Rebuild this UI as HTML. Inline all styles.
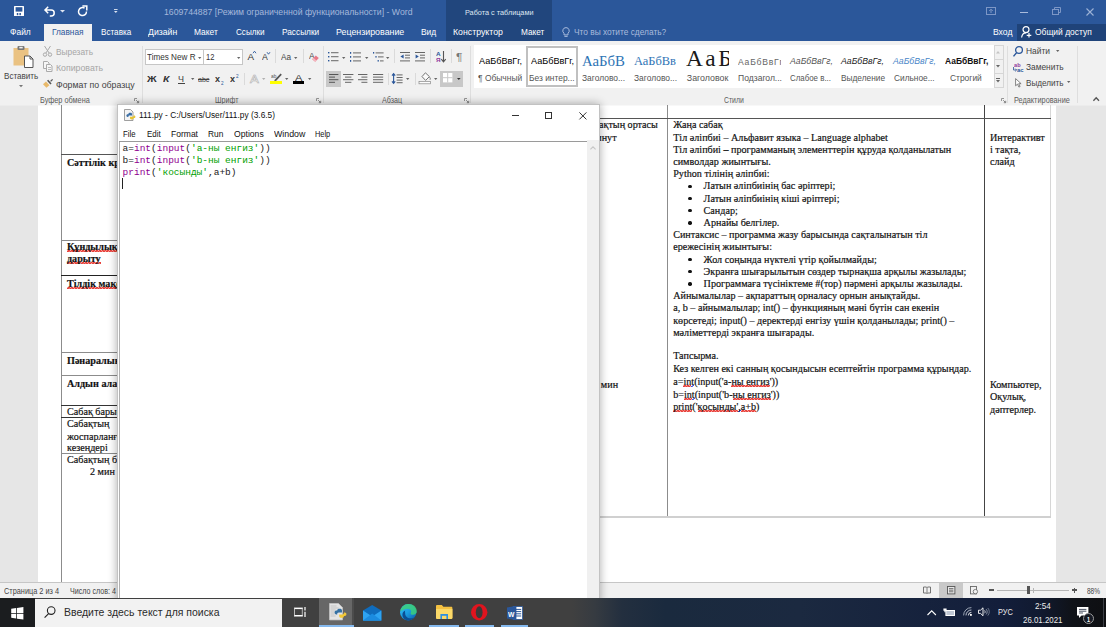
<!DOCTYPE html>
<html lang="ru"><head><meta charset="utf-8"><title>Word</title>
<style>
*{box-sizing:border-box;margin:0;padding:0}
html,body{width:1106px;height:627px;overflow:hidden;background:#e6e6e6}
body{font-family:"Liberation Sans",sans-serif;font-size:9.5px;color:#444;position:relative}
.a{position:absolute;white-space:nowrap}
.t{transform-origin:0 50%}
svg{overflow:visible}
.wr,.wb{background-size:2.8px 2px;background-position:0 100%,1.4px 100%;background-repeat:repeat-x}
.wr{background-image:linear-gradient(135deg,transparent 36%,#e8403a 36%,#e8403a 64%,transparent 64%),linear-gradient(45deg,transparent 36%,#e8403a 36%,#e8403a 64%,transparent 64%)}
.wb{background-image:linear-gradient(135deg,transparent 36%,#3a55e0 36%,#3a55e0 64%,transparent 64%),linear-gradient(45deg,transparent 36%,#3a55e0 36%,#3a55e0 64%,transparent 64%)}

</style></head><body>
<div class="a" style="left:0px;top:0px;width:1106px;height:41px;background:#2b579a;"></div>
<div class="a" style="left:446px;top:0px;width:106px;height:41px;background:#21467d;"></div>
<div class="a" style="left:1017px;top:24px;width:89px;height:17px;background:#1f4379;"></div>
<div class="a" style="left:44px;top:24px;width:48px;height:18px;background:#f1f1f1;"></div>
<div class="a" style="left:0px;top:41px;width:1106px;height:64px;background:#f1f1f1;"></div>
<div class="a" style="left:0px;top:105px;width:1106px;height:1px;background:#ececec;"></div>
<svg class="a" style="left:14px;top:6px;" width="10" height="10" viewBox="0 0 10 10"><rect x="0" y="0" width="10" height="10" rx="0.6" fill="#fff"/><rect x="1.6" y="1.2" width="6.8" height="4.4" fill="#2b579a"/><rect x="2.8" y="7" width="1.5" height="2.2" fill="#2b579a"/><rect x="5.4" y="7" width="1.5" height="2.2" fill="#2b579a"/></svg>
<svg class="a" style="left:44px;top:6px;" width="12" height="10" viewBox="0 0 12 10"><path d="M4.2 0.8L1 4l3.2 3.2M1 4h6.2a3 3 0 0 1 0 6h-1.4" fill="none" stroke="#fff" stroke-width="1.5"/></svg>
<svg class="a" style="left:60px;top:10px;" width="5" height="3" viewBox="0 0 5 3"><path d="M0 0h5l-2.5 2.6z" fill="#dfe6f2"/></svg>
<svg class="a" style="left:77px;top:6px;" width="11" height="10" viewBox="0 0 11 10"><path d="M7.6 2.2A4 4 0 1 0 9.5 5.6" fill="none" stroke="#fff" stroke-width="1.5"/><path d="M5.4 0h4.4v4.4" fill="none" stroke="#fff" stroke-width="1.5"/></svg>
<svg class="a" style="left:113.8px;top:9px;" width="3.6" height="4.4" viewBox="0 0 3.6 4.4"><rect x="0" y="0" width="3.6" height="0.9" fill="#dfe6f2"/><path d="M0 2h3.6l-1.8 2z" fill="#dfe6f2"/></svg>
<div class="a t" id="t0" style="left:164px;top:7.12px;font-size:9.21px;line-height:11.97px;color:#a5b8db;transform:scaleX(0.9454);">1609744887 [Режим ограниченной функциональности] - Word</div>
<div class="a t" id="t1" style="left:465px;top:8.02px;font-size:7.71px;line-height:10.02px;color:#dfe6f2;transform:scaleX(0.9456);">Работа с таблицами</div>
<svg class="a" style="left:986px;top:7px;" width="10" height="8" viewBox="0 0 10 8"><rect x="0.5" y="0.5" width="9" height="7" fill="none" stroke="#7d97c6"/><path d="M5 6V2.4M3.2 4L5 2.2L6.8 4" fill="none" stroke="#7d97c6"/></svg>
<div class="a" style="left:1020px;top:12px;width:8px;height:1px;background:#a9bbdc;"></div>
<svg class="a" style="left:1052px;top:7px;" width="9" height="8" viewBox="0 0 9 8"><path d="M2.5 2V0.5h6v5H7" fill="none" stroke="#7d97c6"/><rect x="0.5" y="2.5" width="6" height="5" fill="none" stroke="#7d97c6"/></svg>
<svg class="a" style="left:1086px;top:8px;" width="8" height="8" viewBox="0 0 8 8"><path d="M0.5 0.5l7 7M7.5 0.5l-7 7" stroke="#9db2d6" stroke-width="1.1"/></svg>
<div class="a t" id="t2" style="left:10.2px;top:26.04px;font-size:9.59px;line-height:12.47px;color:#fff;transform:scaleX(0.8828);">Файл</div>
<div class="a t" id="t3" style="left:52px;top:26.04px;font-size:9.59px;line-height:12.47px;color:#2b579a;transform:scaleX(0.8638);">Главная</div>
<div class="a t" id="t4" style="left:100.8px;top:26.04px;font-size:9.59px;line-height:12.47px;color:#fff;transform:scaleX(0.8481);">Вставка</div>
<div class="a t" id="t5" style="left:148px;top:26.04px;font-size:9.59px;line-height:12.47px;color:#fff;transform:scaleX(0.9067);">Дизайн</div>
<div class="a t" id="t6" style="left:194.4px;top:26.04px;font-size:9.59px;line-height:12.47px;color:#fff;transform:scaleX(0.8779);">Макет</div>
<div class="a t" id="t7" style="left:236px;top:26.04px;font-size:9.59px;line-height:12.47px;color:#fff;transform:scaleX(0.8478);">Ссылки</div>
<div class="a t" id="t8" style="left:282px;top:26.04px;font-size:9.59px;line-height:12.47px;color:#fff;transform:scaleX(0.8651);">Рассылки</div>
<div class="a t" id="t9" style="left:335.7px;top:26.04px;font-size:9.59px;line-height:12.47px;color:#fff;transform:scaleX(0.9234);">Рецензирование</div>
<div class="a t" id="t10" style="left:420.5px;top:26.04px;font-size:9.59px;line-height:12.47px;color:#fff;transform:scaleX(0.8772);">Вид</div>
<div class="a t" id="t11" style="left:453.4px;top:26.04px;font-size:9.59px;line-height:12.47px;color:#fff;transform:scaleX(0.9135);">Конструктор</div>
<div class="a t" id="t12" style="left:520.5px;top:26.04px;font-size:9.59px;line-height:12.47px;color:#fff;transform:scaleX(0.8595);">Макет</div>
<div class="a t" id="t13" style="left:573.5px;top:26.04px;font-size:9.59px;line-height:12.47px;color:#a9bbdc;transform:scaleX(0.8707);">Что вы хотите сделать?</div>
<div class="a t" id="t14" style="left:992.6px;top:26.04px;font-size:9.59px;line-height:12.47px;color:#fff;transform:scaleX(0.8952);">Вход</div>
<div class="a t" id="t15" style="left:1035px;top:26.04px;font-size:9.59px;line-height:12.47px;color:#fff;transform:scaleX(0.8825);">Общий доступ</div>
<svg class="a" style="left:562px;top:27px;" width="8" height="11" viewBox="0 0 8 11"><path d="M4 0.6a3.2 3.2 0 0 1 2 5.7v1.6h-4v-1.6a3.2 3.2 0 0 1 2-5.7z" fill="none" stroke="#a9bbdc"/><path d="M2.4 9.4h3.2" stroke="#a9bbdc"/></svg>
<svg class="a" style="left:1021px;top:26px;" width="11" height="12" viewBox="0 0 11 12"><circle cx="5" cy="3.6" r="3" fill="none" stroke="#fff" stroke-width="1.2"/><path d="M0.6 11.5c0.4-3 2-4.6 4.4-4.6" fill="none" stroke="#fff" stroke-width="1.2"/><path d="M8 7v4.6M5.7 9.3h4.6" stroke="#fff" stroke-width="1.2"/></svg>
<svg class="a" style="left:13px;top:46px;" width="21" height="22" viewBox="0 0 21 22"><rect x="0.5" y="2" width="15" height="17.5" fill="#eac282"/><rect x="4.5" y="0" width="7" height="4" rx="1" fill="#777"/><rect x="6.3" y="0.8" width="3.4" height="1.6" fill="#f1f1f1"/><path d="M11.5 10h5.5l3 3v8.5h-8.5z" fill="#fff" stroke="#555" stroke-width="1"/><path d="M17 10v3h3" fill="none" stroke="#555"/></svg>
<div class="a t" id="t16" style="left:4px;top:69.73px;font-size:9.4px;line-height:12.22px;color:#444;transform:scaleX(0.8629);">Вставить</div>
<svg class="a" style="left:19.4px;top:85px;" width="4" height="2.5" viewBox="0 0 4 2.5"><path d="M0 0h4l-2.0 2.3z" fill="#777"/></svg>
<svg class="a" style="left:43px;top:46px;" width="9" height="11" viewBox="0 0 9 11"><path d="M1.5 0l4.6 7M7.5 0L2.9 7" stroke="#aaa" fill="none"/><circle cx="2" cy="8.6" r="1.7" fill="none" stroke="#aaa"/><circle cx="7" cy="8.6" r="1.7" fill="none" stroke="#aaa"/></svg>
<div class="a t" id="t17" style="left:56px;top:46.13px;font-size:9.4px;line-height:12.22px;color:#a6a6a6;transform:scaleX(0.8872);">Вырезать</div>
<svg class="a" style="left:43px;top:61px;" width="10" height="11" viewBox="0 0 10 11"><path d="M0.5 0.5h4l1.5 1.5v5.5h-5.5z" fill="#f6f6f6" stroke="#aaa"/><path d="M3.5 3.5h4l1.5 1.5v5.5h-5.5z" fill="#f6f6f6" stroke="#aaa"/><path d="M5 6.5h3M5 8.5h3" stroke="#bbb"/></svg>
<div class="a t" id="t18" style="left:56px;top:62.23px;font-size:9.4px;line-height:12.22px;color:#a6a6a6;transform:scaleX(0.9349);">Копировать</div>
<svg class="a" style="left:43px;top:79px;" width="10" height="9" viewBox="0 0 10 9"><path d="M0 5.2l3-2.6l3.4 3.6l-3 2.6z" fill="#e8b96a"/><path d="M4 1.8l1.2-1l3.4 3.6l-1.2 1z" fill="#555"/><path d="M7.6 2.4L9.6 0.4" stroke="#555" stroke-width="1.3"/></svg>
<div class="a t" id="t19" style="left:56px;top:78.53px;font-size:9.4px;line-height:12.22px;color:#444;transform:scaleX(0.9360);">Формат по образцу</div>
<div class="a t" id="t20" style="left:40px;top:96.36px;font-size:8.27px;line-height:10.75px;color:#5c5c5c;transform:scaleX(0.8866);">Буфер обмена</div>
<svg class="a" style="left:134px;top:98px;" width="5" height="5" viewBox="0 0 5 5"><path d="M0.5 3V0.5H3" fill="none" stroke="#8a8a8a" stroke-width="0.9"/><path d="M2.2 2.2l2.3 2.3M4.7 2.8v1.9h-1.9" fill="none" stroke="#7a7a7a" stroke-width="0.9"/></svg>
<div class="a" style="left:142px;top:46px;width:1px;height:57px;background:#dedede;"></div>
<div class="a" style="left:144.5px;top:49px;width:59px;height:15.5px;background:#fff;border:1px solid #c6c6c6"></div>
<div class="a" style="left:203px;top:49px;width:40px;height:15.5px;background:#fff;border:1px solid #c6c6c6"></div>
<div class="a t" id="t21" style="left:146.5px;top:51.13px;font-size:9.4px;line-height:12.22px;color:#333;transform:scaleX(0.8675);">Times New R</div>
<svg class="a" style="left:197.60000000000002px;top:56.5px;" width="3.4" height="2.2" viewBox="0 0 3.4 2.2"><path d="M0 0h3.4l-1.7 2.0z" fill="#666"/></svg>
<div class="a t" id="t22" style="left:206.3px;top:51.13px;font-size:9.4px;line-height:12.22px;color:#333;transform:scaleX(0.8048);">12</div>
<svg class="a" style="left:236.8px;top:56.5px;" width="3.4" height="2.2" viewBox="0 0 3.4 2.2"><path d="M0 0h3.4l-1.7 2.0z" fill="#666"/></svg>
<div class="a t" id="t23" style="left:247.5px;top:51.07px;font-size:9.87px;line-height:12.83px;color:#333;">A</div>
<svg class="a" style="left:253px;top:51px;" width="3" height="2.4" viewBox="0 0 3 2.4"><path d="M0 2.2L1.5 0.2L3 2.2" fill="none" stroke="#2b579a" stroke-width="0.9"/></svg>
<div class="a t" id="t24" style="left:261.8px;top:52.09px;font-size:8.84px;line-height:11.49px;color:#333;transform:scaleX(0.9846);">A</div>
<svg class="a" style="left:267px;top:51.6px;" width="3" height="2.4" viewBox="0 0 3 2.4"><path d="M0 0.2L1.5 2.2L3 0.2" fill="none" stroke="#2b579a" stroke-width="0.9"/></svg>
<div class="a" style="left:275px;top:49px;width:1px;height:14px;background:#dadada;"></div>
<div class="a t" id="t25" style="left:281px;top:50.93px;font-size:9.4px;line-height:12.22px;color:#444;transform:scaleX(0.8719);">Aa</div>
<svg class="a" style="left:293.8px;top:56.5px;" width="3.4" height="2.2" viewBox="0 0 3.4 2.2"><path d="M0 0h3.4l-1.7 2.0z" fill="#666"/></svg>
<div class="a" style="left:302.5px;top:49px;width:1px;height:14px;background:#dadada;"></div>
<div class="a t" id="t26" style="left:308.6px;top:51.27px;font-size:8.46px;line-height:11.0px;color:#444;transform:scaleX(0.9928);">A</div>
<svg class="a" style="left:312px;top:55px;" width="7" height="7" viewBox="0 0 7 7.4"><path d="M0 4.4l3.8-4l3.2 2.8l-3.8 4z" fill="#e8798a"/><path d="M0 4.4l1.3-1.4l3.2 2.8l-1.3 1.4z" fill="#f4b6bf"/></svg>
<div class="a" style="left:322.5px;top:46px;width:1px;height:57px;background:#dedede;"></div>
<div class="a t" id="t27" style="left:146.6px;top:73.36px;font-size:9.78px;line-height:12.71px;color:#333;font-weight:bold;transform:scaleX(1.0874);">Ж</div>
<div class="a t" id="t28" style="left:163.4px;top:73.36px;font-size:9.78px;line-height:12.71px;color:#333;font-weight:bold;font-style:italic;transform:scaleX(1.0639);">К</div>
<div class="a t" id="t29" style="left:178.4px;top:73.33px;font-size:9.4px;line-height:12.22px;color:#444;transform:scaleX(0.9600);">Ч</div>
<div class="a" style="left:178px;top:83px;width:7.4px;height:1px;background:#444;"></div>
<svg class="a" style="left:190.70000000000002px;top:77.5px;" width="3.4" height="2.2" viewBox="0 0 3.4 2.2"><path d="M0 0h3.4l-1.7 2.0z" fill="#666"/></svg>
<div class="a t" id="t30" style="left:198px;top:74.60px;font-size:7.52px;line-height:9.78px;color:#444;transform:scaleX(0.9402);text-decoration:line-through;">abc</div>
<div class="a t" id="t31" style="left:215px;top:73.36px;font-size:9.78px;line-height:12.71px;color:#333;font-weight:bold;transform:scaleX(0.9195);">x</div>
<div class="a t" id="t32" style="left:220.6px;top:79.95px;font-size:5.17px;line-height:6.72px;color:#2b579a;transform:scaleX(0.9043);">2</div>
<div class="a t" id="t33" style="left:229.8px;top:73.36px;font-size:9.78px;line-height:12.71px;color:#333;font-weight:bold;transform:scaleX(0.9195);">x</div>
<div class="a t" id="t34" style="left:235.6px;top:72.95px;font-size:5.17px;line-height:6.72px;color:#2b579a;transform:scaleX(0.9043);">2</div>
<div class="a" style="left:243.5px;top:72.5px;width:1px;height:12px;background:#dadada;"></div>
<div class="a t" id="t35" style="left:249.6px;top:72.62px;font-size:10.72px;line-height:13.94px;color:#fbfbfb;transform:scaleX(1.2297);-webkit-text-stroke:0.55px #b0b0b0;">A</div>
<svg class="a" style="left:262.1px;top:77.5px;" width="3.4" height="2.2" viewBox="0 0 3.4 2.2"><path d="M0 0h3.4l-1.7 2.0z" fill="#b0b0b0"/></svg>
<div class="a t" id="t36" style="left:270.6px;top:72.64px;font-size:5.08px;line-height:6.6px;color:#555;transform:scaleX(0.9547);">ab</div>
<svg class="a" style="left:273px;top:73px;" width="9" height="8" viewBox="0 0 9 8"><path d="M1 7.4L7.6 0.6L8.8 1.8L3 8z" fill="#555"/></svg>
<div class="a" style="left:270px;top:81.2px;width:12px;height:2.8px;background:#ffff00;"></div>
<svg class="a" style="left:285.3px;top:77.5px;" width="3.4" height="2.2" viewBox="0 0 3.4 2.2"><path d="M0 0h3.4l-1.7 2.0z" fill="#666"/></svg>
<div class="a t" id="t37" style="left:295px;top:71.73px;font-size:9.4px;line-height:12.22px;color:#333;transform:scaleX(1.1810);">A</div>
<div class="a" style="left:293.2px;top:81.4px;width:11px;height:2.8px;background:#000;"></div>
<svg class="a" style="left:307.7px;top:77.5px;" width="3.4" height="2.2" viewBox="0 0 3.4 2.2"><path d="M0 0h3.4l-1.7 2.0z" fill="#666"/></svg>
<div class="a t" id="t38" style="left:215px;top:96.36px;font-size:8.27px;line-height:10.75px;color:#5c5c5c;transform:scaleX(0.8639);">Шрифт</div>
<svg class="a" style="left:316px;top:98px;" width="5" height="5" viewBox="0 0 5 5"><path d="M0.5 3V0.5H3" fill="none" stroke="#8a8a8a" stroke-width="0.9"/><path d="M2.2 2.2l2.3 2.3M4.7 2.8v1.9h-1.9" fill="none" stroke="#7a7a7a" stroke-width="0.9"/></svg>
<svg class="a" style="left:327.5px;top:52px;" width="11" height="10" viewBox="0 0 11 10"><rect x="0" y="0" width="1.4" height="1.4" fill="#2b579a"/><rect x="3" y="0.2" width="7.5" height="1" fill="#666"/><rect x="0" y="4" width="1.4" height="1.4" fill="#2b579a"/><rect x="3" y="4.2" width="7.5" height="1" fill="#666"/><rect x="0" y="8" width="1.4" height="1.4" fill="#2b579a"/><rect x="3" y="8.2" width="7.5" height="1" fill="#666"/></svg>
<svg class="a" style="left:342.2px;top:56.5px;" width="3.4" height="2.2" viewBox="0 0 3.4 2.2"><path d="M0 0h3.4l-1.7 2.0z" fill="#666"/></svg>
<svg class="a" style="left:350px;top:52px;" width="11" height="10" viewBox="0 0 11 10"><rect x="0" y="0" width="1.2" height="1.8" fill="#2b579a"/><rect x="3" y="0.4" width="8" height="1" fill="#666"/><rect x="0" y="4" width="1.2" height="1.8" fill="#2b579a"/><rect x="3" y="4.4" width="8" height="1" fill="#666"/><rect x="0" y="8" width="1.2" height="1.8" fill="#2b579a"/><rect x="3" y="8.4" width="8" height="1" fill="#666"/></svg>
<svg class="a" style="left:364.8px;top:56.5px;" width="3.4" height="2.2" viewBox="0 0 3.4 2.2"><path d="M0 0h3.4l-1.7 2.0z" fill="#666"/></svg>
<svg class="a" style="left:372.5px;top:52px;" width="11" height="10" viewBox="0 0 11 10"><rect x="0" y="0" width="1.2" height="1.6" fill="#2b579a"/><rect x="2.6" y="0.4" width="8" height="1" fill="#666"/><rect x="2.4" y="4" width="1.2" height="1.6" fill="#2b579a"/><rect x="5" y="4.4" width="5.6" height="1" fill="#666"/><rect x="4.6" y="8" width="1.2" height="1.6" fill="#2b579a"/><rect x="7" y="8.4" width="3.6" height="1" fill="#666"/></svg>
<svg class="a" style="left:386.1px;top:56.5px;" width="3.4" height="2.2" viewBox="0 0 3.4 2.2"><path d="M0 0h3.4l-1.7 2.0z" fill="#666"/></svg>
<div class="a" style="left:394px;top:49px;width:1px;height:14px;background:#dadada;"></div>
<svg class="a" style="left:400px;top:52px;" width="10" height="10" viewBox="0 0 10 10"><rect x="0" y="0" width="10" height="1" fill="#666"/><rect x="5" y="2.7" width="5" height="1" fill="#666"/><rect x="5" y="5.4" width="5" height="1" fill="#666"/><rect x="0" y="8.4" width="10" height="1" fill="#666"/><path d="M3.6 2.4v4L0.4 4.4z" fill="#2b579a"/></svg>
<svg class="a" style="left:415px;top:52px;" width="10" height="10" viewBox="0 0 10 10"><rect x="0" y="0" width="10" height="1" fill="#666"/><rect x="5" y="2.7" width="5" height="1" fill="#666"/><rect x="5" y="5.4" width="5" height="1" fill="#666"/><rect x="0" y="8.4" width="10" height="1" fill="#666"/><path d="M0.6 2.4v4L3.8 4.4z" fill="#2b579a"/></svg>
<div class="a" style="left:430px;top:49px;width:1px;height:14px;background:#dadada;"></div>
<div class="a t" id="t39" style="left:436px;top:50.70px;font-size:6.02px;line-height:7.83px;color:#2b579a;font-weight:bold;transform:scaleX(1.0552);">A</div>
<div class="a t" id="t40" style="left:436px;top:56.50px;font-size:6.02px;line-height:7.83px;color:#8e3a9d;font-weight:bold;transform:scaleX(1.0628);">Я</div>
<svg class="a" style="left:441px;top:51px;" width="5" height="12" viewBox="0 0 5 12"><path d="M2.5 0v10.6M0.3 8.2l2.2 2.6l2.2-2.6" fill="none" stroke="#555" stroke-width="1.1"/></svg>
<div class="a" style="left:450.5px;top:49px;width:1px;height:14px;background:#dadada;"></div>
<div class="a t" id="t41" style="left:456.4px;top:51.20px;font-size:10.34px;line-height:13.44px;color:#777;transform:scaleX(1.1506);">¶</div>
<div class="a" style="left:325.5px;top:71px;width:15px;height:15.5px;background:#c8c8c8;"></div>
<svg class="a" style="left:328.6px;top:73.5px;" width="9.4" height="9" viewBox="0 0 9.4 9"><rect x="0" y="0" width="9.4" height="1" fill="#555"/><rect x="0" y="2.6" width="6" height="1" fill="#555"/><rect x="0" y="5.2" width="9.4" height="1" fill="#555"/><rect x="0" y="7.8" width="6" height="1" fill="#555"/></svg>
<svg class="a" style="left:343px;top:73.5px;" width="10.4" height="9" viewBox="0 0 10.4 9"><rect x="0" y="0" width="10.4" height="1" fill="#666"/><rect x="2" y="2.6" width="6.4" height="1" fill="#666"/><rect x="0" y="5.2" width="10.4" height="1" fill="#666"/><rect x="2" y="7.8" width="6.4" height="1" fill="#666"/></svg>
<svg class="a" style="left:358.4px;top:73.5px;" width="9.4" height="9" viewBox="0 0 9.4 9"><rect x="0" y="0" width="9.4" height="1" fill="#666"/><rect x="3.4" y="2.6" width="6" height="1" fill="#666"/><rect x="0" y="5.2" width="9.4" height="1" fill="#666"/><rect x="3.4" y="7.8" width="6" height="1" fill="#666"/></svg>
<svg class="a" style="left:372.8px;top:73.5px;" width="10.2" height="9" viewBox="0 0 10.2 9"><rect x="0" y="0" width="10.2" height="1" fill="#666"/><rect x="0" y="2.6" width="10.2" height="1" fill="#666"/><rect x="0" y="5.2" width="10.2" height="1" fill="#666"/><rect x="0" y="7.8" width="10.2" height="1" fill="#666"/></svg>
<div class="a" style="left:387.8px;top:72.5px;width:1px;height:12px;background:#dadada;"></div>
<svg class="a" style="left:392.4px;top:72.5px;" width="11" height="11" viewBox="0 0 11 11"><path d="M1.6 1.4v8.2M0 2.6L1.6 0.6l1.6 2M0 8.4l1.6 2l1.6-2" fill="none" stroke="#2b579a" stroke-width="1.1"/><rect x="4.6" y="1.4" width="6" height="1" fill="#666"/><rect x="4.6" y="4" width="6" height="1" fill="#666"/><rect x="4.6" y="6.6" width="6" height="1" fill="#666"/><rect x="4.6" y="9.2" width="6" height="1" fill="#666"/></svg>
<svg class="a" style="left:406.3px;top:77.5px;" width="3.4" height="2.2" viewBox="0 0 3.4 2.2"><path d="M0 0h3.4l-1.7 2.0z" fill="#666"/></svg>
<div class="a" style="left:415.3px;top:72.5px;width:1px;height:12px;background:#dadada;"></div>
<svg class="a" style="left:419px;top:72px;" width="12" height="12" viewBox="0 0 12 12"><path d="M3 4.6l3.4-3.8l4 3.8l-3.8 3.8z" fill="#fafafa" stroke="#666" stroke-width="0.9"/><path d="M10.6 5.2c0.9 1.3 1 2 0.2 2.6" fill="none" stroke="#666" stroke-width="0.9"/><rect x="0" y="9.4" width="11.4" height="2.4" fill="#fdfdfd" stroke="#888" stroke-width="0.7"/></svg>
<svg class="a" style="left:434.3px;top:77.5px;" width="3.4" height="2.2" viewBox="0 0 3.4 2.2"><path d="M0 0h3.4l-1.7 2.0z" fill="#666"/></svg>
<div class="a" style="left:440px;top:71px;width:23px;height:15.5px;background:#c8c8c8;"></div>
<svg class="a" style="left:442.6px;top:73.4px;" width="9.4" height="9.4" viewBox="0 0 9.4 9.4"><rect x="0" y="0" width="9.4" height="9.4" fill="#fff"/><path d="M4.7 0v9.4M0 4.7h9.4" stroke="#c8c8c8" stroke-width="1"/></svg>
<svg class="a" style="left:457.09999999999997px;top:77.5px;" width="3.6" height="2.3" viewBox="0 0 3.6 2.3"><path d="M0 0h3.6l-1.8 2.1z" fill="#333"/></svg>
<div class="a t" id="t42" style="left:381.6px;top:96.36px;font-size:8.27px;line-height:10.75px;color:#5c5c5c;transform:scaleX(0.8625);">Абзац</div>
<svg class="a" style="left:464px;top:98px;" width="5" height="5" viewBox="0 0 5 5"><path d="M0.5 3V0.5H3" fill="none" stroke="#8a8a8a" stroke-width="0.9"/><path d="M2.2 2.2l2.3 2.3M4.7 2.8v1.9h-1.9" fill="none" stroke="#7a7a7a" stroke-width="0.9"/></svg>
<div class="a" style="left:469.7px;top:46px;width:1px;height:57px;background:#dedede;"></div>
<div class="a" style="left:473.5px;top:45px;width:520px;height:42.5px;background:#fff;"></div>
<div class="a" style="left:993.5px;top:45px;width:10px;height:42.5px;background:#f1f1f1;border:1px solid #d6d6d6"></div>
<div class="a" style="left:994px;top:59px;width:9px;height:1px;background:#d6d6d6;"></div>
<div class="a" style="left:994px;top:73px;width:9px;height:1px;background:#d6d6d6;"></div>
<svg class="a" style="left:996.4px;top:50.5px;" width="4" height="3" viewBox="0 0 4 3"><path d="M0 2.4h4l-2-2.4z" fill="#c4c4c4"/></svg>
<svg class="a" style="left:996.4px;top:65px;" width="4" height="3" viewBox="0 0 4 3"><path d="M0 0h4l-2 2.4z" fill="#666"/></svg>
<svg class="a" style="left:996.4px;top:77.6px;" width="4" height="5" viewBox="0 0 4 5"><rect x="0" y="0" width="4" height="1" fill="#666"/><path d="M0 2h4l-2 2.4z" fill="#666"/></svg>
<div class="a" style="left:526px;top:46px;width:51.5px;height:40.5px;background:#fff;border:2px solid #c0c0c0"></div>
<div class="a t" id="t43" style="left:478.7px;top:56.31px;font-size:9.02px;line-height:11.73px;color:#000;transform:scaleX(1.0095);">АаБбВвГг,</div>
<div class="a t" id="t44" style="left:477.6px;top:72.89px;font-size:8.84px;line-height:11.49px;color:#555;transform:scaleX(0.9563);">¶ Обычный</div>
<div class="a t" id="t45" style="left:530.6px;top:56.31px;font-size:9.02px;line-height:11.73px;color:#000;transform:scaleX(1.0095);">АаБбВвГг,</div>
<div class="a" style="left:528px;top:70px;width:48px;height:15px;overflow:hidden"></div>
<div class="a t" id="t46" style="left:529px;top:72.89px;font-size:8.84px;line-height:11.49px;color:#555;transform:scaleX(0.9509);">Без интер...</div>
<div class="a t" id="t47" style="left:582.4px;top:51.68px;font-size:14.5px;line-height:18.85px;color:#2e74b5;font-family:'Liberation Serif',serif;transform:scaleX(1.0215);">АаБбВ</div>
<div class="a t" id="t48" style="left:582.4px;top:72.89px;font-size:8.84px;line-height:11.49px;color:#555;transform:scaleX(0.9552);">Заголово...</div>
<div class="a t" id="t49" style="left:634px;top:53.16px;font-size:12.4px;line-height:16.12px;color:#2e74b5;font-family:'Liberation Serif',serif;transform:scaleX(1.0041);">АаБбВв</div>
<div class="a t" id="t50" style="left:634px;top:72.89px;font-size:8.84px;line-height:11.49px;color:#555;transform:scaleX(0.9552);">Заголово...</div>
<div class="a t" id="t51" style="left:686px;top:42.89px;font-size:23.4px;line-height:30.42px;color:#1a1a1a;font-family:'Liberation Serif',serif;width:43.3px;overflow:hidden;letter-spacing:2.7px;">АаБб</div>
<div class="a t" id="t52" style="left:686.8px;top:72.89px;font-size:8.84px;line-height:11.49px;color:#555;">Заголовок</div>
<div class="a t" id="t53" style="left:738px;top:56.68px;font-size:8.65px;line-height:11.25px;color:#666;letter-spacing:0.75px;width:43.2px;overflow:hidden;">АаБбВвГг</div>
<div class="a t" id="t54" style="left:737.6px;top:72.89px;font-size:8.84px;line-height:11.49px;color:#555;transform:scaleX(0.9687);">Подзагол...</div>
<div class="a t" id="t55" style="left:790px;top:56.49px;font-size:8.84px;line-height:11.49px;color:#555;font-style:italic;transform:scaleX(0.9857);">АаБбВвГг,</div>
<div class="a t" id="t56" style="left:790px;top:72.89px;font-size:8.84px;line-height:11.49px;color:#555;transform:scaleX(0.8946);">Слабое в...</div>
<div class="a t" id="t57" style="left:841.4px;top:56.31px;font-size:9.02px;line-height:11.73px;color:#222;font-style:italic;transform:scaleX(0.9653);">АаБбВвГг,</div>
<div class="a t" id="t58" style="left:840.8px;top:72.89px;font-size:8.84px;line-height:11.49px;color:#555;transform:scaleX(0.9405);">Выделение</div>
<div class="a t" id="t59" style="left:893.2px;top:56.31px;font-size:9.02px;line-height:11.73px;color:#4a86c8;font-style:italic;transform:scaleX(0.9653);">АаБбВвГг,</div>
<div class="a t" id="t60" style="left:893.8px;top:72.89px;font-size:8.84px;line-height:11.49px;color:#555;transform:scaleX(0.9414);">Сильное...</div>
<div class="a t" id="t61" style="left:944.6px;top:56.31px;font-size:9.02px;line-height:11.73px;color:#111;font-weight:bold;transform:scaleX(0.9368);">АаБбВвГг,</div>
<div class="a t" id="t62" style="left:950px;top:72.89px;font-size:8.84px;line-height:11.49px;color:#555;transform:scaleX(0.9541);">Строгий</div>
<div class="a t" id="t63" style="left:724px;top:96.36px;font-size:8.27px;line-height:10.75px;color:#5c5c5c;transform:scaleX(0.8315);">Стили</div>
<svg class="a" style="left:1001px;top:98px;" width="5" height="5" viewBox="0 0 5 5"><path d="M0.5 3V0.5H3" fill="none" stroke="#8a8a8a" stroke-width="0.9"/><path d="M2.2 2.2l2.3 2.3M4.7 2.8v1.9h-1.9" fill="none" stroke="#7a7a7a" stroke-width="0.9"/></svg>
<div class="a" style="left:1007px;top:46px;width:1px;height:57px;background:#dedede;"></div>
<svg class="a" style="left:1013px;top:46px;" width="10" height="11" viewBox="0 0 10 11"><circle cx="6" cy="4" r="3.4" fill="none" stroke="#2b579a" stroke-width="1.3"/><path d="M3.6 6.6L0.5 10.4" stroke="#2b579a" stroke-width="1.5"/></svg>
<div class="a t" id="t64" style="left:1026px;top:44.73px;font-size:9.4px;line-height:12.22px;color:#444;transform:scaleX(0.8967);">Найти</div>
<svg class="a" style="left:1055.8999999999999px;top:50px;" width="3.4" height="2.2" viewBox="0 0 3.4 2.2"><path d="M0 0h3.4l-1.7 2.0z" fill="#666"/></svg>
<div class="a t" id="t65" style="left:1013.6px;top:61.50px;font-size:6.02px;line-height:7.83px;color:#8e3a9d;font-weight:bold;transform:scaleX(0.9387);">ab</div>
<div class="a t" id="t66" style="left:1016.6px;top:67.30px;font-size:6.02px;line-height:7.83px;color:#2b579a;font-weight:bold;transform:scaleX(0.9846);">ac</div>
<svg class="a" style="left:1012.6px;top:67.4px;" width="4" height="4" viewBox="0 0 4 4"><path d="M0.5 0v3h3M2.2 1.6L3.6 3L2.2 4.4" fill="none" stroke="#2b579a" stroke-width="0.8"/></svg>
<div class="a t" id="t67" style="left:1026px;top:61.33px;font-size:9.4px;line-height:12.22px;color:#444;transform:scaleX(0.8923);">Заменить</div>
<svg class="a" style="left:1015.4px;top:78px;" width="7" height="10" viewBox="0 0 7 10"><path d="M0.6 0.6v7.2l1.9-1.7l1.4 3l1.2-0.6l-1.4-2.8h2.4z" fill="#fff" stroke="#666" stroke-width="0.8"/></svg>
<div class="a t" id="t68" style="left:1026px;top:77.13px;font-size:9.4px;line-height:12.22px;color:#444;transform:scaleX(0.8694);">Выделить</div>
<svg class="a" style="left:1066.8999999999999px;top:81.4px;" width="3.4" height="2.2" viewBox="0 0 3.4 2.2"><path d="M0 0h3.4l-1.7 2.0z" fill="#666"/></svg>
<div class="a t" id="t69" style="left:1013.8px;top:96.36px;font-size:8.27px;line-height:10.75px;color:#5c5c5c;transform:scaleX(0.8862);">Редактирование</div>
<div class="a" style="left:1076.6px;top:46px;width:1px;height:57px;background:#dedede;"></div>
<svg class="a" style="left:1093.4px;top:97.2px;" width="6.4" height="4" viewBox="0 0 6.4 4"><path d="M0.4 3.7L3.2 0.8L6 3.7" fill="none" stroke="#555" stroke-width="1.35"/></svg>
<div class="a" style="left:0px;top:105px;width:1106px;height:477px;background:#e6e6e6;"></div>
<div class="a" style="left:38px;top:105px;width:1018px;height:477px;background:#fff;"></div>
<div class="a" style="left:0px;top:105px;width:1106px;height:1px;background:#ececec;"></div>
<div class="a" style="left:38px;top:105px;width:1018px;height:1px;background:#f8f8f8;"></div>
<div class="a" style="left:61px;top:105px;width:1px;height:477px;background:#8c8c8c;"></div>
<div class="a" style="left:667px;top:105px;width:1px;height:412px;background:#8c8c8c;"></div>
<div class="a" style="left:984px;top:105px;width:1px;height:412px;background:#444;"></div>
<div class="a" style="left:1050px;top:105px;width:1.4px;height:413px;background:#d6d6d6;"></div>
<div class="a" style="left:600px;top:118px;width:451px;height:1px;background:#555;"></div>
<div class="a" style="left:600px;top:516px;width:451.4px;height:1.6px;background:#d0d0d0;"></div>
<div class="a" style="left:61px;top:154px;width:60px;height:1px;background:#555;"></div>
<div class="a" style="left:61px;top:240px;width:60px;height:1px;background:#8c8c8c;"></div>
<div class="a" style="left:61px;top:275px;width:60px;height:1px;background:#222;"></div>
<div class="a" style="left:61px;top:352px;width:60px;height:1px;background:#8c8c8c;"></div>
<div class="a" style="left:61px;top:375px;width:60px;height:1px;background:#8c8c8c;"></div>
<div class="a" style="left:61px;top:405px;width:60px;height:1px;background:#333;"></div>
<div class="a" style="left:61px;top:417px;width:60px;height:1px;background:#333;"></div>
<div class="a" style="left:61px;top:453px;width:60px;height:1px;background:#8c8c8c;"></div>
<div class="a t" id="t70" style="left:67px;top:155.69px;font-size:10.14px;line-height:13.18px;color:#111;font-family:'Liberation Serif',serif;font-weight:bold;-webkit-text-stroke:0.18px #111;">Сәттілік критерийі</div>
<div class="a t" id="t71" style="left:67px;top:240.39px;font-size:10.14px;line-height:13.18px;color:#111;font-family:'Liberation Serif',serif;font-weight:bold;-webkit-text-stroke:0.18px #111;"><span class="wr">Құндылықтарды</span></div>
<div class="a t" id="t72" style="left:67px;top:252.49px;font-size:10.14px;line-height:13.18px;color:#111;font-family:'Liberation Serif',serif;font-weight:bold;-webkit-text-stroke:0.18px #111;"><span class="wr">дарыту</span></div>
<div class="a t" id="t73" style="left:67px;top:276.99px;font-size:10.14px;line-height:13.18px;color:#111;font-family:'Liberation Serif',serif;font-weight:bold;-webkit-text-stroke:0.18px #111;"><span class="wr">Тілдік мақсаттар</span></div>
<div class="a t" id="t74" style="left:67px;top:353.79px;font-size:10.14px;line-height:13.18px;color:#111;font-family:'Liberation Serif',serif;font-weight:bold;-webkit-text-stroke:0.18px #111;">Пәнаралық байланыс</div>
<div class="a t" id="t75" style="left:67px;top:377.29px;font-size:10.14px;line-height:13.18px;color:#111;font-family:'Liberation Serif',serif;font-weight:bold;-webkit-text-stroke:0.18px #111;">Алдын ала білім</div>
<div class="a t" id="t76" style="left:67px;top:404.99px;font-size:10.14px;line-height:13.18px;color:#111;font-family:'Liberation Serif',serif;-webkit-text-stroke:0.18px #111;">Сабақ барысы</div>
<div class="a t" id="t77" style="left:67px;top:417.29px;font-size:10.14px;line-height:13.18px;color:#111;font-family:'Liberation Serif',serif;-webkit-text-stroke:0.18px #111;">Сабақтың</div>
<div class="a t" id="t78" style="left:67px;top:429.59px;font-size:10.14px;line-height:13.18px;color:#111;font-family:'Liberation Serif',serif;-webkit-text-stroke:0.18px #111;">жоспарланған</div>
<div class="a t" id="t79" style="left:67px;top:441.49px;font-size:10.14px;line-height:13.18px;color:#111;font-family:'Liberation Serif',serif;-webkit-text-stroke:0.18px #111;">кезеңдері</div>
<div class="a t" id="t80" style="left:67px;top:452.99px;font-size:10.14px;line-height:13.18px;color:#111;font-family:'Liberation Serif',serif;-webkit-text-stroke:0.18px #111;">Сабақтың басы</div>
<div class="a t" id="t81" style="left:90px;top:464.99px;font-size:10.14px;line-height:13.18px;color:#111;font-family:'Liberation Serif',serif;-webkit-text-stroke:0.18px #111;">2 мин</div>
<div class="a t" id="t82" style="left:582.6px;top:118.49px;font-size:10.14px;line-height:13.18px;color:#111;font-family:'Liberation Serif',serif;-webkit-text-stroke:0.18px #111;">Сабақтың ортасы</div>
<div class="a t" id="t83" style="left:577.2px;top:130.69px;font-size:10.14px;line-height:13.18px;color:#111;font-family:'Liberation Serif',serif;-webkit-text-stroke:0.18px #111;">30 минут</div>
<div class="a t" id="t84" style="left:588.2px;top:378.19px;font-size:10.14px;line-height:13.18px;color:#111;font-family:'Liberation Serif',serif;-webkit-text-stroke:0.18px #111;">10 мин</div>
<div class="a t" id="t85" style="left:673.2px;top:118.49px;font-size:10.14px;line-height:13.18px;color:#111;font-family:'Liberation Serif',serif;-webkit-text-stroke:0.18px #111;">Жаңа сабақ</div>
<div class="a t" id="t86" style="left:673.2px;top:130.69px;font-size:10.14px;line-height:13.18px;color:#111;font-family:'Liberation Serif',serif;-webkit-text-stroke:0.18px #111;">Тіл әліпбиі – Альфавит языка – Language alphabet</div>
<div class="a t" id="t87" style="left:673.2px;top:142.89px;font-size:10.14px;line-height:13.18px;color:#111;font-family:'Liberation Serif',serif;-webkit-text-stroke:0.18px #111;">Тіл әліпбиі <b>–</b> программаның элементтерін құруда қолданылатын</div>
<div class="a t" id="t88" style="left:673.2px;top:155.09px;font-size:10.14px;line-height:13.18px;color:#111;font-family:'Liberation Serif',serif;-webkit-text-stroke:0.18px #111;">символдар жиынтығы.</div>
<div class="a t" id="t89" style="left:673.2px;top:167.29px;font-size:10.14px;line-height:13.18px;color:#111;font-family:'Liberation Serif',serif;-webkit-text-stroke:0.18px #111;">Python тілінің әліпбиі:</div>
<div class="a" style="left:688.4px;top:184.7px;width:3.4px;height:3.4px;background:#111;border-radius:50%;"></div>
<div class="a t" id="t90" style="left:703.6px;top:179.49px;font-size:10.14px;line-height:13.18px;color:#111;font-family:'Liberation Serif',serif;-webkit-text-stroke:0.18px #111;">Латын әліпбиінің бас әріптері;</div>
<div class="a" style="left:688.4px;top:196.9px;width:3.4px;height:3.4px;background:#111;border-radius:50%;"></div>
<div class="a t" id="t91" style="left:703.6px;top:191.69px;font-size:10.14px;line-height:13.18px;color:#111;font-family:'Liberation Serif',serif;-webkit-text-stroke:0.18px #111;">Латын әліпбиінің кіші әріптері;</div>
<div class="a" style="left:688.4px;top:209.1px;width:3.4px;height:3.4px;background:#111;border-radius:50%;"></div>
<div class="a t" id="t92" style="left:703.6px;top:203.89px;font-size:10.14px;line-height:13.18px;color:#111;font-family:'Liberation Serif',serif;-webkit-text-stroke:0.18px #111;">Сандар;</div>
<div class="a" style="left:688.4px;top:221.3px;width:3.4px;height:3.4px;background:#111;border-radius:50%;"></div>
<div class="a t" id="t93" style="left:703.6px;top:216.09px;font-size:10.14px;line-height:13.18px;color:#111;font-family:'Liberation Serif',serif;-webkit-text-stroke:0.18px #111;">Арнайы белгілер.</div>
<div class="a t" id="t94" style="left:673.2px;top:228.29px;font-size:10.14px;line-height:13.18px;color:#111;font-family:'Liberation Serif',serif;-webkit-text-stroke:0.18px #111;">Синтаксис – программа жазу барысында сақталынатын тіл</div>
<div class="a t" id="t95" style="left:673.2px;top:240.49px;font-size:10.14px;line-height:13.18px;color:#111;font-family:'Liberation Serif',serif;-webkit-text-stroke:0.18px #111;">ережесінің жиынтығы:</div>
<div class="a" style="left:688.4px;top:257.9px;width:3.4px;height:3.4px;background:#111;border-radius:50%;"></div>
<div class="a t" id="t96" style="left:703.6px;top:252.69px;font-size:10.14px;line-height:13.18px;color:#111;font-family:'Liberation Serif',serif;-webkit-text-stroke:0.18px #111;">Жол соңында нүктелі үтір қойылмайды;</div>
<div class="a" style="left:688.4px;top:270.1px;width:3.4px;height:3.4px;background:#111;border-radius:50%;"></div>
<div class="a t" id="t97" style="left:703.6px;top:264.89px;font-size:10.14px;line-height:13.18px;color:#111;font-family:'Liberation Serif',serif;-webkit-text-stroke:0.18px #111;">Экранға шығарылытын сөздер тырнақша арқылы жазылады;</div>
<div class="a" style="left:688.4px;top:282.3px;width:3.4px;height:3.4px;background:#111;border-radius:50%;"></div>
<div class="a t" id="t98" style="left:703.6px;top:277.09px;font-size:10.14px;line-height:13.18px;color:#111;font-family:'Liberation Serif',serif;-webkit-text-stroke:0.18px #111;">Программаға түсініктеме #(тор) пәрмені арқылы жазылады.</div>
<div class="a t" id="t99" style="left:673.2px;top:289.29px;font-size:10.14px;line-height:13.18px;color:#111;font-family:'Liberation Serif',serif;-webkit-text-stroke:0.18px #111;">Айнымалылар – ақпараттың орналасу орнын анықтайды.</div>
<div class="a t" id="t100" style="left:673.2px;top:301.49px;font-size:10.14px;line-height:13.18px;color:#111;font-family:'Liberation Serif',serif;-webkit-text-stroke:0.18px #111;">a, b – айнымалылар; int() – функцияның мәні бүтін сан екенін</div>
<div class="a t" id="t101" style="left:673.2px;top:313.69px;font-size:10.14px;line-height:13.18px;color:#111;font-family:'Liberation Serif',serif;-webkit-text-stroke:0.18px #111;">көрсетеді; input() – деректерді енгізу үшін қолданылады; print() –</div>
<div class="a t" id="t102" style="left:673.2px;top:325.89px;font-size:10.14px;line-height:13.18px;color:#111;font-family:'Liberation Serif',serif;-webkit-text-stroke:0.18px #111;">мәліметтерді экранға шығарады.</div>
<div class="a t" id="t103" style="left:673.2px;top:349.39px;font-size:10.14px;line-height:13.18px;color:#111;font-family:'Liberation Serif',serif;-webkit-text-stroke:0.18px #111;">Тапсырма.</div>
<div class="a t" id="t104" style="left:673.2px;top:362.49px;font-size:10.14px;line-height:13.18px;color:#111;font-family:'Liberation Serif',serif;-webkit-text-stroke:0.18px #111;">Кез келген екі санның қосындысын есептейтін программа құрыңдар.</div>
<div class="a t" id="t105" style="left:673.2px;top:375.49px;font-size:10.14px;line-height:13.18px;color:#111;font-family:'Liberation Serif',serif;-webkit-text-stroke:0.18px #111;">a=<span class="wr">in</span><span class="wb">t</span>(input('a-<span class="wr">ны енгиз</span>'))</div>
<div class="a t" id="t106" style="left:673.2px;top:387.79px;font-size:10.14px;line-height:13.18px;color:#111;font-family:'Liberation Serif',serif;-webkit-text-stroke:0.18px #111;">b=<span class="wr">in</span><span class="wb">t</span>(input('b-<span class="wr">ны енгиз</span>'))</div>
<div class="a t" id="t107" style="left:673.2px;top:400.09px;font-size:10.14px;line-height:13.18px;color:#111;font-family:'Liberation Serif',serif;-webkit-text-stroke:0.18px #111;"><span class="wr">print</span>('<span class="wr">қосынды'</span><span class="wb">,</span><span class="wr">a+b</span>)</div>
<div class="a t" id="t108" style="left:990px;top:130.59px;font-size:10.14px;line-height:13.18px;color:#111;font-family:'Liberation Serif',serif;-webkit-text-stroke:0.18px #111;">Интерактивт</div>
<div class="a t" id="t109" style="left:990px;top:142.79px;font-size:10.14px;line-height:13.18px;color:#111;font-family:'Liberation Serif',serif;-webkit-text-stroke:0.18px #111;">і тақта,</div>
<div class="a t" id="t110" style="left:990px;top:154.99px;font-size:10.14px;line-height:13.18px;color:#111;font-family:'Liberation Serif',serif;-webkit-text-stroke:0.18px #111;">слайд</div>
<div class="a t" id="t111" style="left:990px;top:378.19px;font-size:10.14px;line-height:13.18px;color:#111;font-family:'Liberation Serif',serif;-webkit-text-stroke:0.18px #111;">Компьютер,</div>
<div class="a t" id="t112" style="left:990px;top:390.39px;font-size:10.14px;line-height:13.18px;color:#111;font-family:'Liberation Serif',serif;-webkit-text-stroke:0.18px #111;">Оқулық,</div>
<div class="a t" id="t113" style="left:990px;top:402.59px;font-size:10.14px;line-height:13.18px;color:#111;font-family:'Liberation Serif',serif;-webkit-text-stroke:0.18px #111;">дәптерлер.</div>
<div class="a" style="left:0px;top:582px;width:1106px;height:16px;background:#f1f1f1;border-top:1px solid #c6c6c6;"></div>
<div class="a t" id="t114" style="left:3.8px;top:586.66px;font-size:8.27px;line-height:10.75px;color:#444;transform:scaleX(0.8878);">Страница 2 из 4</div>
<div class="a t" id="t115" style="left:69.8px;top:586.66px;font-size:8.27px;line-height:10.75px;color:#444;transform:scaleX(0.8631);">Число слов: 4</div>
<svg class="a" style="left:923px;top:586px;" width="8" height="8" viewBox="0 0 8 8"><path d="M0.5 1h3l0.5 0.6l0.5-0.6h3v6h-3l-0.5 0.6l-0.5-0.6h-3z" fill="none" stroke="#666" stroke-width="0.9"/><path d="M4 1.6v5.6" stroke="#666" stroke-width="0.8"/></svg>
<div class="a" style="left:939px;top:583px;width:23.5px;height:15px;background:#c9c9c9;"></div>
<svg class="a" style="left:946.5px;top:586px;" width="8.4" height="8.4" viewBox="0 0 8.4 8.4"><rect x="0.5" y="0.5" width="7.4" height="7.4" fill="#e8e8e8" stroke="#555" stroke-width="0.9"/><path d="M2 2.6h4.4M2 4.2h4.4M2 5.8h4.4" stroke="#555" stroke-width="0.8"/></svg>
<svg class="a" style="left:970px;top:586px;" width="8" height="8.4" viewBox="0 0 8 8.4"><rect x="0.5" y="0.5" width="6" height="7.4" fill="none" stroke="#666" stroke-width="0.9"/><circle cx="5.4" cy="5.6" r="2.2" fill="#f1f1f1" stroke="#666" stroke-width="0.8"/></svg>
<div class="a" style="left:989px;top:589.4px;width:4.8px;height:1.2px;background:#555;"></div>
<div class="a" style="left:997px;top:589.6px;width:71.5px;height:1px;background:#b5b5b5;"></div>
<div class="a" style="left:1032.5px;top:587.5px;width:1px;height:5px;background:#b5b5b5;"></div>
<div class="a" style="left:1027px;top:585.6px;width:3.2px;height:8.4px;background:#555;"></div>
<div class="a" style="left:1072px;top:589.4px;width:5px;height:1.2px;background:#555;"></div>
<div class="a" style="left:1073.9px;top:587.5px;width:1.2px;height:5px;background:#555;"></div>
<div class="a t" id="t116" style="left:1086.8px;top:586.66px;font-size:8.27px;line-height:10.75px;color:#444;transform:scaleX(0.7856);">88%</div>
<div class="a" style="left:117px;top:104px;width:483px;height:501px;background:#fff;box-shadow:0 0 9px 0 rgba(0,0,0,0.33);outline:1px solid #c2c2c2;outline-offset:-1px"></div>
<svg class="a" style="left:124px;top:109px;" width="11" height="12" viewBox="0 0 11 12"><path d="M0.5 0.5h6l2.5 2.5v8.5h-8.5z" fill="#f4f4f4" stroke="#888" stroke-width="0.8"/><path d="M4.4 5.2c0-1 0.6-1.4 1.8-1.4s1.8 0.4 1.8 1.4v1.4h-2.4c-1 0-1.2 0.6-1.2 1.4h-0.8c-0.8 0-1.2-0.6-1.2-1.4s0.4-1.4 1.2-1.4z" fill="#3a6ea5"/><path d="M9.6 9c0 1-0.6 1.4-1.8 1.4s-1.8-0.4-1.8-1.4v-1.2h2.4c1 0 1.2-0.6 1.2-1.4h0.6c0.8 0 1.2 0.6 1.2 1.3s-0.4 1.3-1.2 1.3z" fill="#e8c534"/></svg>
<div class="a t" id="t117" style="left:138.7px;top:110.21px;font-size:9.02px;line-height:11.73px;color:#111;transform:scaleX(0.9242);">111.py - C:/Users/User/111.py (3.6.5)</div>
<div class="a" style="left:512px;top:115px;width:7px;height:1px;background:#333;"></div>
<svg class="a" style="left:545px;top:112px;" width="7" height="7" viewBox="0 0 7 7"><rect x="0.5" y="0.5" width="6" height="6" fill="none" stroke="#333" stroke-width="1"/></svg>
<svg class="a" style="left:579px;top:112px;" width="8" height="8" viewBox="0 0 8 8"><path d="M0.4 0.4l7 7M7.4 0.4l-7 7" stroke="#333" stroke-width="1"/></svg>
<div class="a t" id="t118" style="left:123.4px;top:128.51px;font-size:9.02px;line-height:11.73px;color:#111;transform:scaleX(0.8602);">File</div>
<div class="a t" id="t119" style="left:146.5px;top:128.51px;font-size:9.02px;line-height:11.73px;color:#111;transform:scaleX(0.8812);">Edit</div>
<div class="a t" id="t120" style="left:170.8px;top:128.51px;font-size:9.02px;line-height:11.73px;color:#111;transform:scaleX(0.9453);">Format</div>
<div class="a t" id="t121" style="left:208px;top:128.51px;font-size:9.02px;line-height:11.73px;color:#111;transform:scaleX(0.9246);">Run</div>
<div class="a t" id="t122" style="left:233.5px;top:128.51px;font-size:9.02px;line-height:11.73px;color:#111;transform:scaleX(0.9557);">Options</div>
<div class="a t" id="t123" style="left:273.6px;top:128.51px;font-size:9.02px;line-height:11.73px;color:#111;transform:scaleX(0.9789);">Window</div>
<div class="a t" id="t124" style="left:315.3px;top:128.51px;font-size:9.02px;line-height:11.73px;color:#111;transform:scaleX(0.8195);">Help</div>
<div class="a" style="left:119px;top:141px;width:468px;height:1.4px;background:#9a9a9a;"></div>
<div class="a" style="left:119px;top:142px;width:1px;height:456px;background:#b0b0b0;"></div>
<div class="a" style="left:587px;top:140px;width:12px;height:458px;background:#f0f0f0;"></div>
<svg class="a" style="left:590px;top:146px;" width="6" height="4" viewBox="0 0 6 4"><path d="M0.4 3.4L3 0.8L5.6 3.4" fill="none" stroke="#c6c6c6" stroke-width="1.1"/></svg>
<div class="a t" id="t125" style="left:122.6px;top:143.20px;font-size:9.49px;line-height:12.34px;color:#222;font-family:'Liberation Mono',monospace;"><span style="color:#222">a=</span><span style="color:#900090">int</span><span style="color:#222">(</span><span style="color:#900090">input</span><span style="color:#222">(</span><span style="color:#00a000">'a-ны енгиз'</span><span style="color:#222">))</span></div>
<div class="a t" id="t126" style="left:122.6px;top:154.90px;font-size:9.49px;line-height:12.34px;color:#222;font-family:'Liberation Mono',monospace;"><span style="color:#222">b=</span><span style="color:#900090">int</span><span style="color:#222">(</span><span style="color:#900090">input</span><span style="color:#222">(</span><span style="color:#00a000">'b-ны енгиз'</span><span style="color:#222">))</span></div>
<div class="a t" id="t127" style="left:122.6px;top:166.70px;font-size:9.49px;line-height:12.34px;color:#222;font-family:'Liberation Mono',monospace;"><span style="color:#900090">print</span><span style="color:#222">(</span><span style="color:#00a000">'косынды'</span><span style="color:#222">,a+b)</span></div>
<div class="a" style="left:122.4px;top:178px;width:1px;height:11px;background:#222;"></div>
<div class="a" style="left:0px;top:598px;width:1106px;height:29px;background:#3d3d3d;background:linear-gradient(90deg,#404040 0,#404040 572px,#363b41 595px,#232f3f 622px,#1a2a3e 665px,#1b2940 800px,#131e3b 1000px,#111a30 1040px,#0f1218 1072px,#0e0f12 1106px);"></div>
<div class="a" style="left:0px;top:598px;width:35px;height:29px;background:#1b1d1f;"></div>
<svg class="a" style="left:11px;top:607px;" width="12.6" height="12.6" viewBox="0 0 12.6 13"><path d="M0 1.8l5.2-0.7v5h-5.2zM6 1l6.6-1v6.1h-6.6zM0 6.9h5.2v5l-5.2-0.7zM6 6.9h6.6v6.1l-6.6-1z" fill="#fff"/></svg>
<div class="a" style="left:35px;top:598.6px;width:247px;height:28.4px;background:#f2f2f2;"></div>
<svg class="a" style="left:43.5px;top:606px;" width="12" height="12" viewBox="0 0 12 12"><circle cx="7.2" cy="4.6" r="3.8" fill="none" stroke="#222" stroke-width="1.1"/><path d="M4.6 7.6L0.6 11.6" stroke="#222" stroke-width="1.2"/></svg>
<div class="a t" id="t128" style="left:64px;top:606.40px;font-size:10.34px;line-height:13.44px;color:#2b2b2b;transform:scaleX(1.0128);">Введите здесь текст для поиска</div>
<svg class="a" style="left:294px;top:607px;" width="12" height="10.4" viewBox="0 0 12 10.4"><rect x="0" y="0.6" width="8.8" height="1.5" fill="#fff"/><rect x="0" y="8" width="8.8" height="1.5" fill="#fff"/><path d="M0.5 1v8M8.3 1v8" stroke="#d8d8d8" stroke-width="0.8"/><path d="M11 0v3.4M11 4.8v5.2" stroke="#fff" stroke-width="1.2"/></svg>
<div class="a" style="left:319px;top:598px;width:32.5px;height:29px;background:#676767;"></div>
<div class="a" style="left:351.5px;top:598px;width:2.5px;height:29px;background:#4c4c4c;"></div>
<div class="a" style="left:319px;top:625px;width:35px;height:2px;background:#85b9ee;"></div>
<div class="a" style="left:428.7px;top:625px;width:30.1px;height:2px;background:#85b9ee;"></div>
<div class="a" style="left:464.8px;top:625px;width:29.0px;height:2px;background:#85b9ee;"></div>
<div class="a" style="left:500.6px;top:625px;width:27.9px;height:2px;background:#85b9ee;"></div>
<svg class="a" style="left:328.6px;top:603px;" width="17" height="17.4" viewBox="0 0 17 17.4"><path d="M0.5 0.5h9l4 4v12.4h-13z" fill="#e4e4e4" stroke="#c2c2c2" stroke-width="0.8"/><path d="M1.6 3h6M1.6 5h8M1.6 7h5M1.6 9h4M1.6 11h4M1.6 13h5" stroke="#bdbdbd" stroke-width="0.8"/><path d="M8.2 7.6c0-1.3 0.8-1.8 2.4-1.8s2.4 0.5 2.4 1.8v2h-3.2c-1.2 0-1.6 0.8-1.6 1.8h-1c-1 0-1.6-0.8-1.6-1.9s0.6-1.9 1.6-1.9z" fill="#3571a3"/><path d="M15 13c0 1.3-0.8 1.8-2.4 1.8s-2.4-0.5-2.4-1.8v-1.6h3.2c1.2 0 1.6-0.8 1.6-1.8h0.8c1 0 1.6 0.8 1.6 1.7s-0.6 1.7-1.6 1.7z" fill="#f2c736"/></svg>
<svg class="a" style="left:363px;top:604.6px;" width="18.4" height="15.6" viewBox="0 0 18.4 15.6"><path d="M0 5.4L9.2 0l9.2 5.4v10.2h-18.4z" fill="#0f6cbd"/><path d="M0 5.6l9.2 6l9.2-6v10h-18.4z" fill="#2ea3f2"/><path d="M0 15.6l9.2-7l9.2 7z" fill="#1b8be0"/></svg>
<svg class="a" style="left:399px;top:604.2px;" width="18.4" height="16.4" viewBox="0 0 18.4 16.4"><defs><linearGradient id="eg" x1="0" y1="0" x2="1" y2="1"><stop offset="0" stop-color="#35c1f1"/><stop offset="0.5" stop-color="#1b9de2"/><stop offset="1" stop-color="#0c59a4"/></linearGradient></defs><circle cx="9.2" cy="8.2" r="8.2" fill="url(#eg)"/><path d="M1.2 7C2.4 2.6 6 0 9.8 0c4.6 0 8 3.2 8 7.2c0 2-1.6 3.6-3.6 3.6c-1.6 0-2.6-0.6-2.6-1.4c0-0.6 0.6-0.8 0.6-1.8c0-1.4-1.4-2.8-3.6-2.8c-3 0-5.6 2-7.4 2.2z" fill="#3ccf7a" opacity="0.85"/><path d="M6.2 9.4c0 2.6 2 4.8 5.2 4.8c1.6 0 3-0.4 4-1c-1.4 2-3.6 3.2-6.2 3.2c-3.4 0-5.8-2.6-5.8-5.6c0-1.8 1-3.4 2.8-4.2c-0.4 0.8 0 2 0 2.8z" fill="#0b4f94"/></svg>
<svg class="a" style="left:435.8px;top:605px;" width="16.4" height="14" viewBox="0 0 16.4 14"><path d="M0 1.2c0-0.7 0.5-1.2 1.2-1.2h4.6l1.6 1.8h7.8c0.7 0 1.2 0.5 1.2 1.2v9.8c0 0.7-0.5 1.2-1.2 1.2h-14c-0.7 0-1.2-0.5-1.2-1.2z" fill="#f4c141"/><path d="M0 4h16.4v8.8c0 0.7-0.5 1.2-1.2 1.2h-14c-0.7 0-1.2-0.5-1.2-1.2z" fill="#fbd969"/><path d="M4.4 9h7.6v5h-7.6z" fill="#2f8fe0"/><path d="M6 10.8h4.4v3.2h-4.4z" fill="#fbd969"/></svg>
<svg class="a" style="left:471px;top:604px;" width="16.4" height="16.4" viewBox="0 0 16.4 16.4"><ellipse cx="8.2" cy="8.2" rx="8.2" ry="8.2" fill="#e0141e"/><ellipse cx="8.2" cy="8.2" rx="3.4" ry="6" fill="#3a3a3a"/></svg>
<svg class="a" style="left:506.8px;top:605.6px;" width="15.8" height="14" viewBox="0 0 15.8 14"><rect x="6" y="0.6" width="9.6" height="12.8" fill="#fff" stroke="#2b579a" stroke-width="0.8"/><path d="M8.6 3.4h5.6M8.6 5.6h5.6M8.6 7.8h5.6M8.6 10h5.6" stroke="#2b579a" stroke-width="1"/><path d="M0 1.4L9.4 0v14L0 12.6z" fill="#2b579a"/></svg>
<div class="a t" id="t129" style="left:508.40000000000003px;top:609.60px;font-size:7.52px;line-height:9.78px;color:#fff;font-weight:bold;transform:scaleX(0.9022);">W</div>
<svg class="a" style="left:927.4px;top:610px;" width="9.4" height="5.4" viewBox="0 0 9.4 5.4"><path d="M0.5 5L4.7 0.8L8.9 5" fill="none" stroke="#fff" stroke-width="1.1"/></svg>
<svg class="a" style="left:943px;top:607.6px;" width="12.4" height="8.4" viewBox="0 0 12.4 8.4"><rect x="2.4" y="2" width="9.6" height="6" fill="#fff"/><rect x="3.4" y="3" width="7.6" height="4" fill="#bfc7d4"/><path d="M0.4 0.4h3.2v2.4h-1v1.4h-1.2v-1.4h-1z" fill="#fff"/></svg>
<svg class="a" style="left:962.5px;top:607.4px;" width="9" height="9" viewBox="0 0 9 9"><path d="M0.6 8.4a7.8 7.8 0 0 1 7.8-7.8" fill="none" stroke="#aab3c2" stroke-width="0.9"/><path d="M3 8.4a5.4 5.4 0 0 1 5.4-5.4" fill="none" stroke="#cfd5df" stroke-width="0.9"/><path d="M5.4 8.4a3 3 0 0 1 3-3" fill="none" stroke="#fff" stroke-width="0.9"/><rect x="7" y="7" width="1.8" height="1.8" fill="#fff"/></svg>
<svg class="a" style="left:978.4px;top:607.2px;" width="12" height="9.6" viewBox="0 0 12 9.6"><path d="M0.5 3.2h2L5 0.8v8L2.5 6.4h-2z" fill="none" stroke="#fff" stroke-width="0.9"/><path d="M6.6 3.4c0.7 0.8 0.7 2 0 2.8" fill="none" stroke="#fff" stroke-width="0.8"/><path d="M8.2 2.2c1.3 1.5 1.3 3.7 0 5.2" fill="none" stroke="#aab3c2" stroke-width="0.8"/><path d="M9.8 1c2 2.2 2 5.4 0 7.6" fill="none" stroke="#7f8a9e" stroke-width="0.8"/></svg>
<div class="a t" id="t130" style="left:998px;top:607.49px;font-size:8.84px;line-height:11.49px;color:#ececec;transform:scaleX(0.8367);">РУС</div>
<div class="a t" id="t131" style="left:1035.2px;top:600.69px;font-size:8.84px;line-height:11.49px;color:#ececec;transform:scaleX(0.9193);">2:54</div>
<div class="a t" id="t132" style="left:1023px;top:614.59px;font-size:8.84px;line-height:11.49px;color:#ececec;transform:scaleX(0.8917);">26.01.2021</div>
<svg class="a" style="left:1077px;top:607.4px;" width="11.4" height="11" viewBox="0 0 11.4 11"><path d="M0 0h11.4v8.4h-6.8l-2.6 2.6v-2.6h-2z" fill="#fff"/><path d="M2 2.4h7.4M2 4.2h7.4M2 6h4" stroke="#1a2438" stroke-width="0.8"/></svg>
<div class="a" style="left:1082.5px;top:612.5px;width:11px;height:11px;border-radius:50%;background:#161a24;border:1px solid #9a9a9a"></div>
<div class="a t" id="t133" style="left:1086.6px;top:614.56px;font-size:6.96px;line-height:9.05px;color:#fff;font-weight:bold;transform:scaleX(0.7742);">1</div>
<div class="a" style="left:1102.6px;top:598px;width:0.8px;height:29px;background:#3c3f46;"></div>
</body></html>
